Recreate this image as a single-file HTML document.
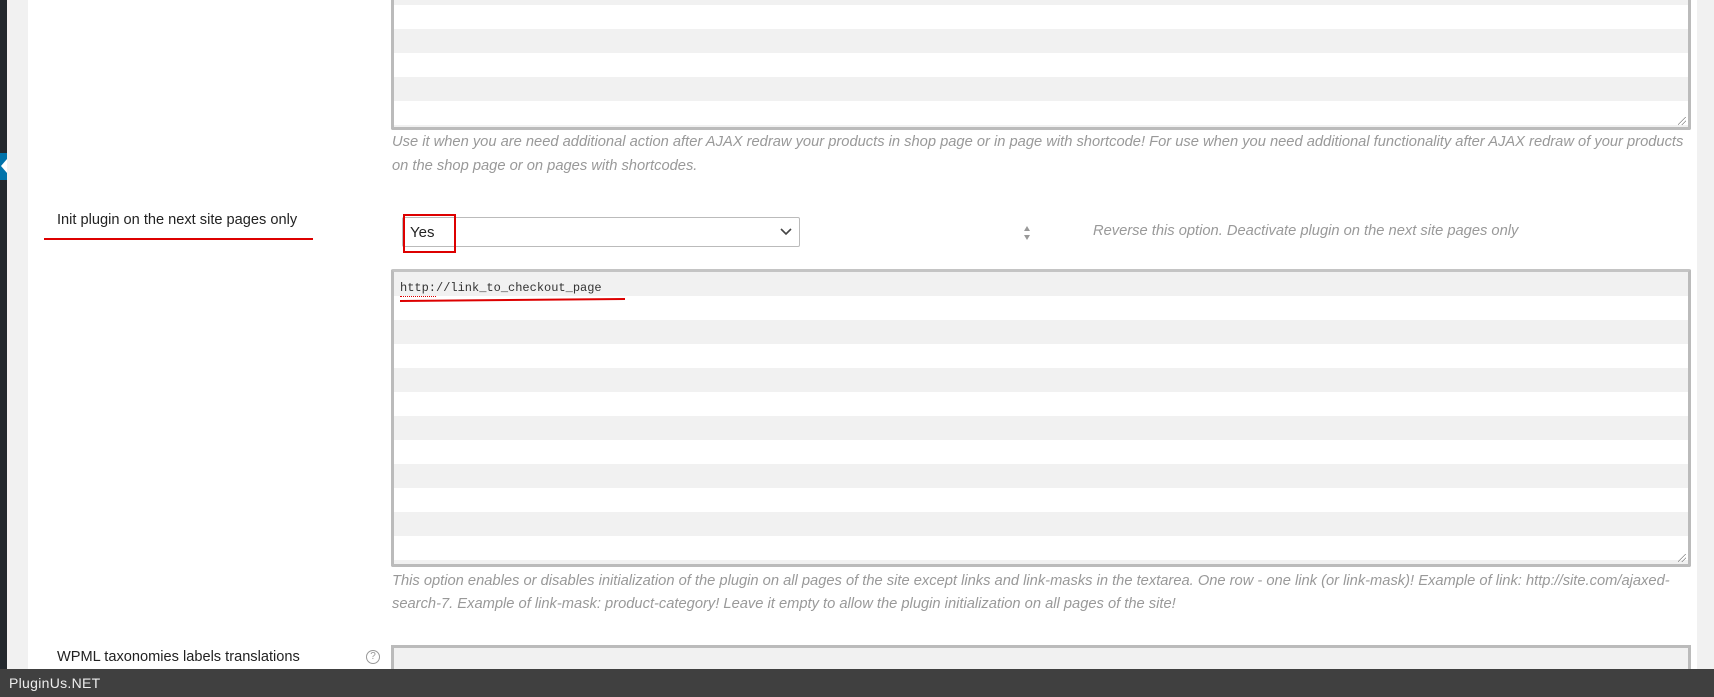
<!DOCTYPE html>
<html><head><meta charset="utf-8"><style>
*{margin:0;padding:0;box-sizing:border-box}
html{width:1714px;height:697px;overflow:hidden}
body{width:1714px;height:697px;overflow:hidden;background:#fff;position:relative;font-family:"Liberation Sans",sans-serif}
.a{position:absolute}
.ta{position:absolute;left:391px;width:1300px;border:3px solid #bbb;border-top-color:#c4c4c4;border-radius:2px;
background:repeating-linear-gradient(to bottom,#f1f1f1 0,#f1f1f1 24px,#fff 24px,#fff 48px)}
.help{position:absolute;left:392px;font-size:14.7px;font-style:italic;color:#999;white-space:nowrap}
.lbl{position:absolute;font-size:14.6px;color:#222;white-space:nowrap}
.grip{position:absolute;right:2px;bottom:2px;width:8px;height:8px;background:linear-gradient(135deg,transparent 45%,#888 45%,#888 52%,transparent 52%,transparent 70%,#888 70%,#888 77%,transparent 77%)}
</style></head><body>
<div class="a" style="left:0;top:0;width:7px;height:669px;background:#23282d"></div>
<div class="a" style="left:0;top:153px;width:7px;height:27px;background:#0073aa"></div>
<div class="a" style="left:1px;top:159px;width:0;height:0;border-top:7px solid transparent;border-bottom:7px solid transparent;border-right:6px solid #fff"></div>
<div class="a" style="left:7px;top:0;width:21px;height:669px;background:#f1f1f1"></div>
<div class="a" style="left:1697px;top:0;width:17px;height:669px;background:#f1f1f1"></div>

<div class="ta" style="top:-30px;height:160px;background-position:0 8px"><div class="grip"></div></div>
<div class="help" style="top:134px">Use it when you are need additional action after AJAX redraw your products in shop page or in page with shortcode! For use when you need additional functionality after AJAX redraw of your products</div>
<div class="help" style="top:158px">on the shop page or on pages with shortcodes.</div>

<div class="lbl" style="left:57px;top:212px">Init plugin on the next site pages only</div>
<div class="a" style="left:44px;top:238px;width:269px;height:2px;background:#d00"></div>

<div class="a" style="left:402px;top:217px;width:398px;height:30px;border:1px solid #bbb;border-radius:2px;background:#fff"></div>
<div class="a" style="left:410px;top:224px;font-size:15px;color:#222">Yes</div>
<svg class="a" style="left:780px;top:227px" width="12" height="10" viewBox="0 0 12 10"><path d="M1 2l5 5 5-5" fill="none" stroke="#444" stroke-width="1.6"/></svg>
<div class="a" style="left:403px;top:214px;width:53px;height:39px;border:2px solid #d00"></div>
<svg class="a" style="left:1022px;top:224px" width="10" height="18" viewBox="0 0 10 18"><path d="M5 2l3 5H2zM5 16l3-5H2z" fill="#999"/></svg>
<div class="help" style="left:1093px;top:223px">Reverse this option. Deactivate plugin on the next site pages only</div>

<div class="ta" style="top:269px;height:298px;background-position:0 0"><div class="grip"></div></div>
<div class="a" style="left:400px;top:281px;font-family:'Liberation Mono',monospace;font-size:12px;color:#333">http://link_to_checkout_page</div>
<div class="a" style="left:400px;top:295px;width:36px;height:2px;border-bottom:1px dotted #d00"></div>
<div class="a" style="left:400px;top:299px;width:225px;height:2px;background:#d00;transform:rotate(-0.5deg)"></div>

<div class="help" style="top:573px">This option enables or disables initialization of the plugin on all pages of the site except links and link-masks in the textarea. One row - one link (or link-mask)! Example of link: http://site.com/ajaxed-</div>
<div class="help" style="top:596px">search-7. Example of link-mask: product-category! Leave it empty to allow the plugin initialization on all pages of the site!</div>

<div class="lbl" style="left:57px;top:649px">WPML taxonomies labels translations</div>
<div class="a" style="left:366px;top:650px;width:14px;height:14px;border:1px solid #999;border-radius:50%;font-size:10px;color:#999;text-align:center;line-height:12px">?</div>
<div class="a" style="left:391px;top:645px;width:1300px;height:24px;border:3px solid #bbb;border-bottom:none;background:#f1f1f1"></div>

<div class="a" style="left:0;top:669px;width:1714px;height:28px;background:#404040"></div>
<div class="a" style="left:9px;top:675px;font-size:14px;color:#eee;letter-spacing:0.3px">PluginUs.NET</div>
</body></html>
